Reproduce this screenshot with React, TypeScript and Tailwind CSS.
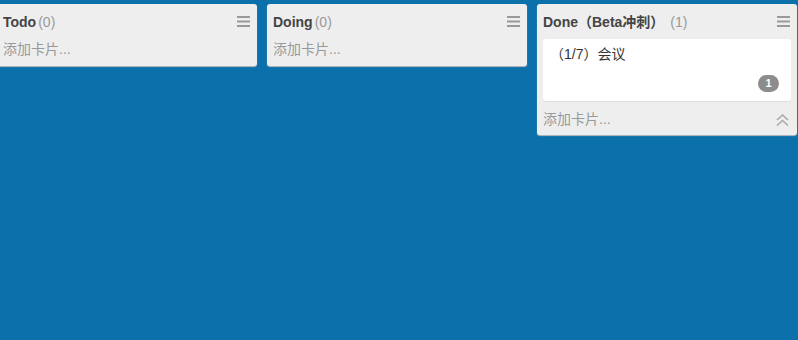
type Card = { title: string; badge?: number };
type List = { name: string; cards: Card[] };

const lists: List[] = [
  { name: "Todo", cards: [] },
  { name: "Doing", cards: [] },
  { name: "Done（Beta冲刺）", cards: [{ title: "（1/7）会议", badge: 1 }] },
];

function MenuIcon() {
  return (
    <svg width="13" height="11" viewBox="0 0 13 11" className="text-[#999]">
      <rect x="0" y="0" width="13" height="2" fill="currentColor" />
      <rect x="0" y="4.5" width="13" height="2" fill="currentColor" />
      <rect x="0" y="9" width="13" height="2" fill="currentColor" />
    </svg>
  );
}

function CollapseIcon() {
  return (
    <svg width="13" height="12" viewBox="0 0 13 12" fill="none" stroke="currentColor" strokeWidth="1.6" className="text-[#aaa]">
      <polyline points="1,6 6.5,1 12,6" />
      <polyline points="1,11.5 6.5,6.5 12,11.5" />
    </svg>
  );
}

function BoardList({ list }: { list: List }) {
  const hasCards = list.cards.length > 0;
  return (
    <div className="w-[260px] shrink-0 rounded-[3px] bg-[#eeeeee] shadow-[0_1px_1px_#bbb]">
      <div className="flex h-[35px] items-center justify-between pl-[6px] pr-[7px]">
        <div className="text-[14px] leading-none">
          <span className="font-bold text-[#444]">{list.name}</span>
          <span className={`${hasCards ? "ml-[6px]" : "ml-[2px]"} text-[#999]`}>({list.cards.length})</span>
        </div>
        <MenuIcon />
      </div>
      {list.cards.map((card) => (
        <div
          key={card.title}
          className="mx-[6px] flex h-[62px] flex-col justify-between rounded-[3px] bg-white pb-[9px] pl-[7px] pr-[12px] pt-[5px] shadow-[0_1px_0_#ddd]"
        >
          <div className="text-[14px] leading-[20px] text-[#333]">{card.title}</div>
          {card.badge !== undefined && (
            <div className="flex justify-end">
              <span className="flex h-[17px] w-[21px] items-center justify-center rounded-full bg-[#8c8c8c] text-[11px] font-bold leading-none text-white">
                {card.badge}
              </span>
            </div>
          )}
        </div>
      ))}
      <div
        className={`flex items-center justify-between pl-[6px] pr-[8px] ${hasCards ? "h-[34px] pt-[3px]" : "h-[27px] pb-[6px]"}`}
      >
        <span className="text-[14px] text-[#999]">添加卡片...</span>
        {hasCards && <CollapseIcon />}
      </div>
    </div>
  );
}

export default function App() {
  return (
    <div
      className="h-[340px] w-[798px] overflow-hidden bg-[#0c71ab]"
      style={{ fontFamily: '"Liberation Sans", "Noto Sans CJK SC", sans-serif' }}
    >
      <div className="ml-[-3px] flex items-start gap-[10px] pt-[4px]">
        {lists.map((list) => (
          <BoardList key={list.name} list={list} />
        ))}
      </div>
    </div>
  );
}
